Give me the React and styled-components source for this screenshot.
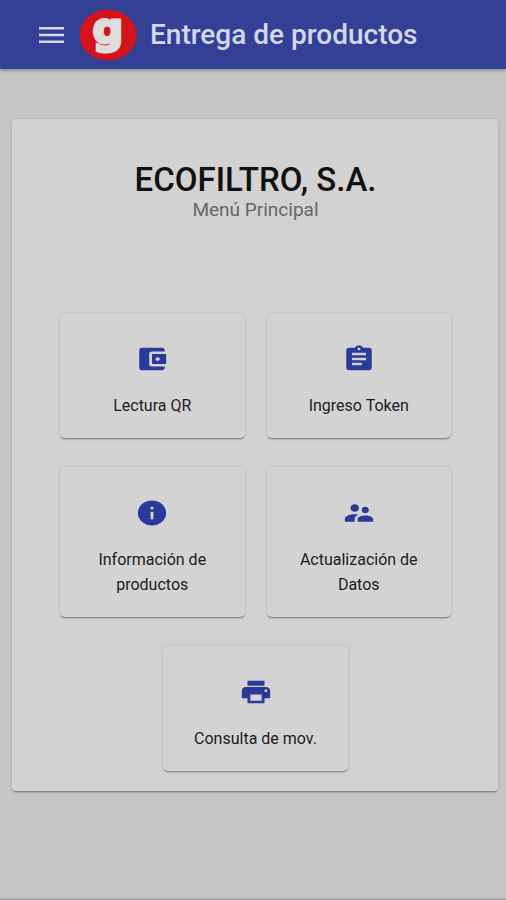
import React from "react";
import styled, { createGlobalStyle } from "styled-components";
import {
  MdAccountBalanceWallet,
  MdAssignment,
  MdInfo,
  MdSupervisorAccount,
  MdPrint,
} from "react-icons/md";

const GlobalStyle = createGlobalStyle`
  *, *::before, *::after { box-sizing: border-box; }
  body {
    margin: 0;
    background: #c6c6c6;
    font-family: Roboto, "Liberation Sans", sans-serif;
  }
`;

const Page = styled.div`
  min-height: 100vh;
  display: flex;
  flex-direction: column;
  border-bottom: 2px solid #a9a9a9;
`;

const Toolbar = styled.header`
  display: flex;
  align-items: center;
  height: 69px;
  padding: 0 38px;
  background: #344095;
  color: #d3d8ee;
  box-shadow: 0 1px 4px rgba(0, 0, 0, 0.4);
`;

const MenuButton = styled.button`
  display: flex;
  padding: 0;
  border: 0;
  background: none;
  color: inherit;
  cursor: pointer;
`;

const Logo = styled.svg`
  flex: none;
  width: 58px;
  height: 52px;
  margin-left: 14px;
  overflow: visible;
`;

const LogoLetter = styled.text`
  font: bold 43px "DejaVu Sans", sans-serif;
  fill: #dfdcdc;
  stroke: #dfdcdc;
  stroke-width: 3;
  text-anchor: middle;
`;

const ToolbarTitle = styled.h1`
  margin: 0 0 0 13px;
  font-size: 28px;
  font-weight: 500;
  line-height: 32px;
  white-space: nowrap;
`;

const Panel = styled.main`
  margin: 50px 8px 32px 12px;
  padding: 43px 47px 20px 48px;
  border-radius: 4px;
  background: #d2d2d2;
  box-shadow: 0 2px 2px -1px rgba(0, 0, 0, 0.4), 0 0 4px rgba(0, 0, 0, 0.12);
`;

const Company = styled.h2`
  margin: 0;
  color: #101010;
  font-size: 33px;
  font-weight: 500;
  line-height: 36px;
  text-align: center;
`;

const Subtitle = styled.p`
  margin: 0 0 91px;
  color: #666;
  font-size: 19px;
  line-height: 24px;
  text-align: center;
`;

const Tiles = styled.nav`
  display: flex;
  flex-wrap: wrap;
  justify-content: center;
  gap: 29px 22px;
`;

const Tile = styled.button`
  display: flex;
  flex-direction: column;
  align-items: center;
  width: calc(50% - 11px);
  padding: 31px 24px 20px;
  border: 0;
  border-radius: 5px;
  background: #d3d3d3;
  color: #1c1c1c;
  font: inherit;
  font-size: 16px;
  line-height: 25px;
  cursor: pointer;
  box-shadow: 0 2px 2px -1px rgba(0, 0, 0, 0.4), 0 0 3px rgba(0, 0, 0, 0.12);

  svg {
    width: 34px;
    height: 30px;
    margin-bottom: 19px;
    color: #2b3a98;
  }
`;

const items = [
  { label: "Lectura QR", Icon: MdAccountBalanceWallet },
  { label: "Ingreso Token", Icon: MdAssignment },
  { label: "Información de productos", Icon: MdInfo },
  { label: "Actualización de Datos", Icon: MdSupervisorAccount },
  { label: "Consulta de mov.", Icon: MdPrint },
];

export default function App() {
  return (
    <>
      <GlobalStyle />
      <Page>
        <Toolbar>
          <MenuButton type="button" aria-label="Menú">
            <svg width="27" height="18" viewBox="0 0 27 18" aria-hidden="true">
              <path d="M1 2.2h25M1 9h25M1 15.8h25" stroke="currentColor" strokeWidth="2.4" />
            </svg>
          </MenuButton>
          <Logo viewBox="0 0 58 52" aria-hidden="true">
            <ellipse cx="29" cy="26" rx="28.5" ry="25.5" fill="#d5131c" />
            <LogoLetter x="29" y="34">g</LogoLetter>
          </Logo>
          <ToolbarTitle>Entrega de productos</ToolbarTitle>
        </Toolbar>
        <Panel>
          <Company>ECOFILTRO, S.A.</Company>
          <Subtitle>Menú Principal</Subtitle>
          <Tiles aria-label="Menú Principal">
            {items.map(({ label, Icon }) => (
              <Tile type="button" key={label}>
                <Icon preserveAspectRatio="none" aria-hidden="true" />
                {label}
              </Tile>
            ))}
          </Tiles>
        </Panel>
      </Page>
    </>
  );
}
